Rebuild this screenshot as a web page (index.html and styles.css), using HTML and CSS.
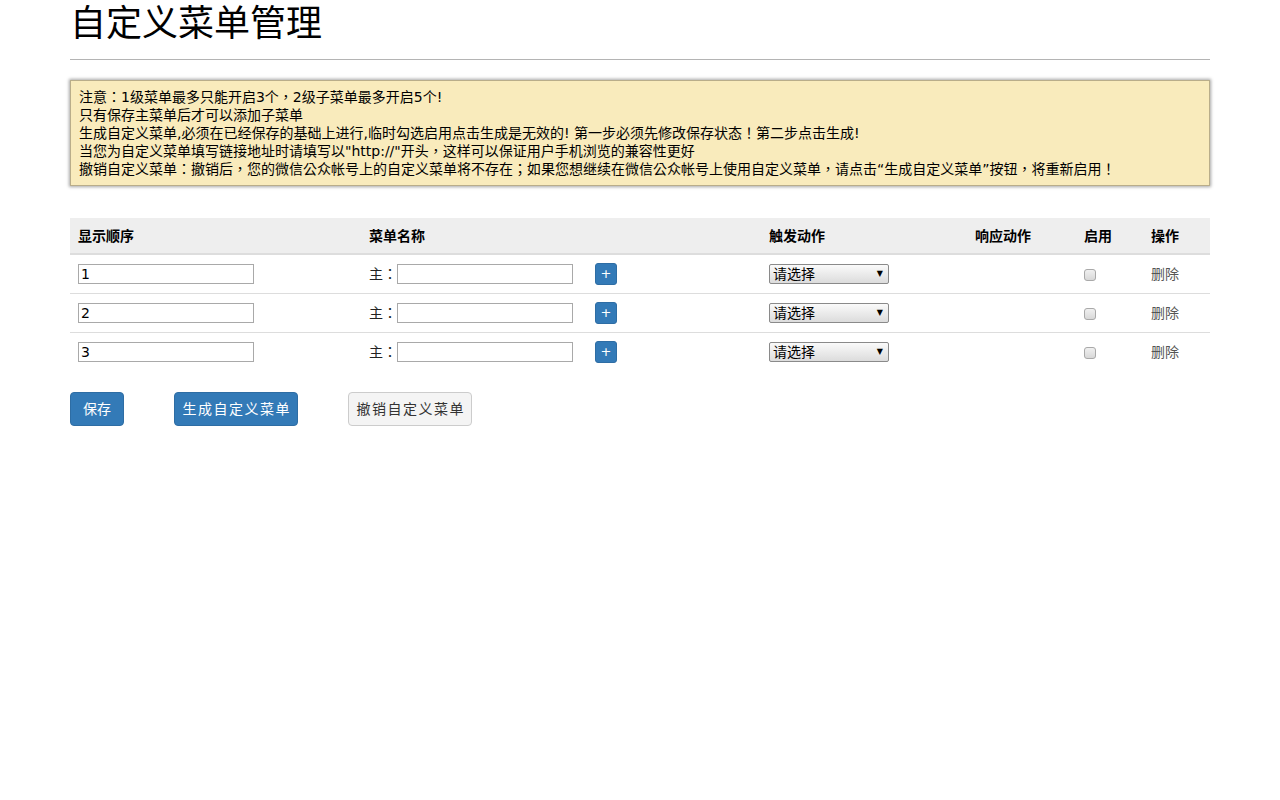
FILE: index.html
```html
<!DOCTYPE html>
<html lang="zh-CN">
<head>
<meta charset="utf-8">
<title>自定义菜单管理</title>
<link rel="stylesheet" href="styles.css">
</head>
<body>
<div class="container">
  <h1 class="page-title">自定义菜单管理</h1>
  <hr class="divider">
  <div class="notice" lang="zh-TW">
    <div>注意：1级菜单最多只能开启3个，2级子菜单最多开启5个!</div>
    <div>只有保存主菜单后才可以添加子菜单</div>
    <div>生成自定义菜单,必须在已经保存的基础上进行,临时勾选启用点击生成是无效的! 第一步必须先修改保存状态！第二步点击生成!</div>
    <div>当您为自定义菜单填写链接地址时请填写以"http://"开头，这样可以保证用户手机浏览的兼容性更好</div>
    <div>撤销自定义菜单：撤销后，您的微信公众帐号上的自定义菜单将不存在；如果您想继续在微信公众帐号上使用自定义菜单，请点击“生成自定义菜单”按钮，将重新启用！</div>
  </div>

  <table class="menu-table">
    <thead>
      <tr>
        <th class="c-order">显示顺序</th>
        <th class="c-name">菜单名称</th>
        <th class="c-add"></th>
        <th class="c-trigger">触发动作</th>
        <th class="c-resp">响应动作</th>
        <th class="c-on">启用</th>
        <th class="c-op">操作</th>
      </tr>
    </thead>
    <tbody>
      <tr>
        <td><input class="txt" type="text" value="1"></td>
        <td><span class="lbl" lang="zh-TW">主：</span><input class="txt" type="text" value=""></td>
        <td><button class="btn-add">+</button></td>
        <td><span class="sel-wrap"><select class="sel"><option>请选择</option></select></span></td>
        <td></td>
        <td><input class="chk" type="checkbox"></td>
        <td><a class="del">删除</a></td>
      </tr>
      <tr>
        <td><input class="txt" type="text" value="2"></td>
        <td><span class="lbl" lang="zh-TW">主：</span><input class="txt" type="text" value=""></td>
        <td><button class="btn-add">+</button></td>
        <td><span class="sel-wrap"><select class="sel"><option>请选择</option></select></span></td>
        <td></td>
        <td><input class="chk" type="checkbox"></td>
        <td><a class="del">删除</a></td>
      </tr>
      <tr>
        <td><input class="txt" type="text" value="3"></td>
        <td><span class="lbl" lang="zh-TW">主：</span><input class="txt" type="text" value=""></td>
        <td><button class="btn-add">+</button></td>
        <td><span class="sel-wrap"><select class="sel"><option>请选择</option></select></span></td>
        <td></td>
        <td><input class="chk" type="checkbox"></td>
        <td><a class="del">删除</a></td>
      </tr>
    </tbody>
  </table>

  <div class="actions">
    <button class="btn btn-primary btn-save">保存</button>
    <button class="btn btn-primary btn-wide">生成自定义菜单</button>
    <button class="btn btn-default btn-wide">撤销自定义菜单</button>
  </div>
</div>
</body>
</html>
```
FILE: styles.css
```css
* { box-sizing: border-box; }
html, body {
  margin: 0;
  padding: 0;
  background: #fff;
}
body {
  font-family: "DejaVu Sans", "Noto Sans CJK TC", sans-serif;
  font-size: 14px;
  line-height: 18px;
  color: #000;
}
.container {
  width: 1140px;
  margin: 0 auto;
}
.page-title {
  margin: 0;
  padding: 0;
  font-size: 36px;
  font-weight: normal;
  line-height: 40px;
  font-family: "Noto Sans CJK SC", sans-serif;
}
.divider {
  margin: 19px 0 20px;
  border: 0;
  border-top: 1px solid #b4b4b4;
  height: 0;
}
.notice {
  background: #f9ebbc;
  border: 1px solid #b9ad8a;
  box-shadow: 0 0 3px 1px rgba(0,0,0,0.35);
  padding: 7px 8px;
  font-size: 14px;
  line-height: 18px;
  color: #000;
}
.menu-table {
  margin-top: 32px;
  width: 100%;
  border-collapse: collapse;
  table-layout: fixed;
}
.menu-table th {
  background: #eeeeee;
  text-align: left;
  font-weight: bold;
  padding: 9px 8px 8px;
  line-height: 18px;
  border-bottom: 2px solid #dddddd;
  font-size: 14px;
}
.c-order { width: 291px; }
.c-name { width: 226px; }
.c-add { width: 174px; }
.c-trigger { width: 206px; }
.c-resp { width: 109px; }
.c-on { width: 67px; }
.c-op { width: 67px; }
.menu-table td {
  padding: 8px 8px;
  border-top: 1px solid #dddddd;
  vertical-align: middle;
  height: 39px;
  line-height: 18px;
}
.txt {
  width: 176px;
  height: 20px;
  border: 1px solid #a9a9a9;
  padding: 0 2px;
  margin: 0;
  font-family: "DejaVu Sans", "Noto Sans CJK TC", sans-serif;
  font-size: 14px;
  color: #000;
  background: #fff;
  vertical-align: middle;
  border-radius: 0;
}
.lbl {
  vertical-align: middle;
  color: #222;
}
.btn-add {
  width: 22px;
  height: 22px;
  padding: 0;
  margin: 0;
  border: 1px solid #2e6da4;
  border-radius: 3px;
  background: #337ab7;
  color: #fff;
  font-family: "DejaVu Sans", sans-serif;
  font-size: 13px;
  line-height: 20px;
  vertical-align: middle;
}
.sel-wrap {
  position: relative;
  display: inline-block;
  vertical-align: middle;
}
.sel-wrap::after {
  content: "▼";
  position: absolute;
  right: 6px;
  top: 5px;
  font-size: 8px;
  line-height: 9px;
  color: #000;
  pointer-events: none;
}
.sel {
  -webkit-appearance: none;
  appearance: none;
  width: 120px;
  height: 20px;
  margin: 0;
  padding: 0 3px;
  border: 1px solid #8a8a8a;
  border-radius: 2px;
  background: linear-gradient(#fafafa, #dcdcdc);
  font-family: "DejaVu Sans", "Noto Sans CJK TC", sans-serif;
  font-size: 14px;
  line-height: 18px;
  color: #000;
  display: block;
}
.chk {
  -webkit-appearance: none;
  appearance: none;
  width: 12px;
  height: 12px;
  margin: 0;
  border: 1px solid #a9a9a9;
  border-radius: 3px;
  background: linear-gradient(#f0f0f0, #d8d8d8);
  vertical-align: middle;
}
.del {
  color: #555555;
  text-decoration: none;
  cursor: pointer;
}
.actions {
  display: flex;
  gap: 50px;
  margin-top: 20px;
}
.btn {
  height: 34px;
  padding: 6px 0;
  border: 1px solid transparent;
  border-radius: 4px;
  font-family: "DejaVu Sans", "Noto Sans CJK TC", sans-serif;
  font-size: 14px;
  line-height: 20px;
  text-align: center;
  cursor: pointer;
}
.btn-save { width: 54px; }
.btn-wide {
  width: 124px;
  letter-spacing: 1.5px;
  text-indent: 1.5px;
}
.btn-primary {
  background: #337ab7;
  border-color: #2e6da4;
  color: #fff;
}
.btn-default {
  background: #f4f4f4;
  border-color: #cccccc;
  color: #333;
}
```
